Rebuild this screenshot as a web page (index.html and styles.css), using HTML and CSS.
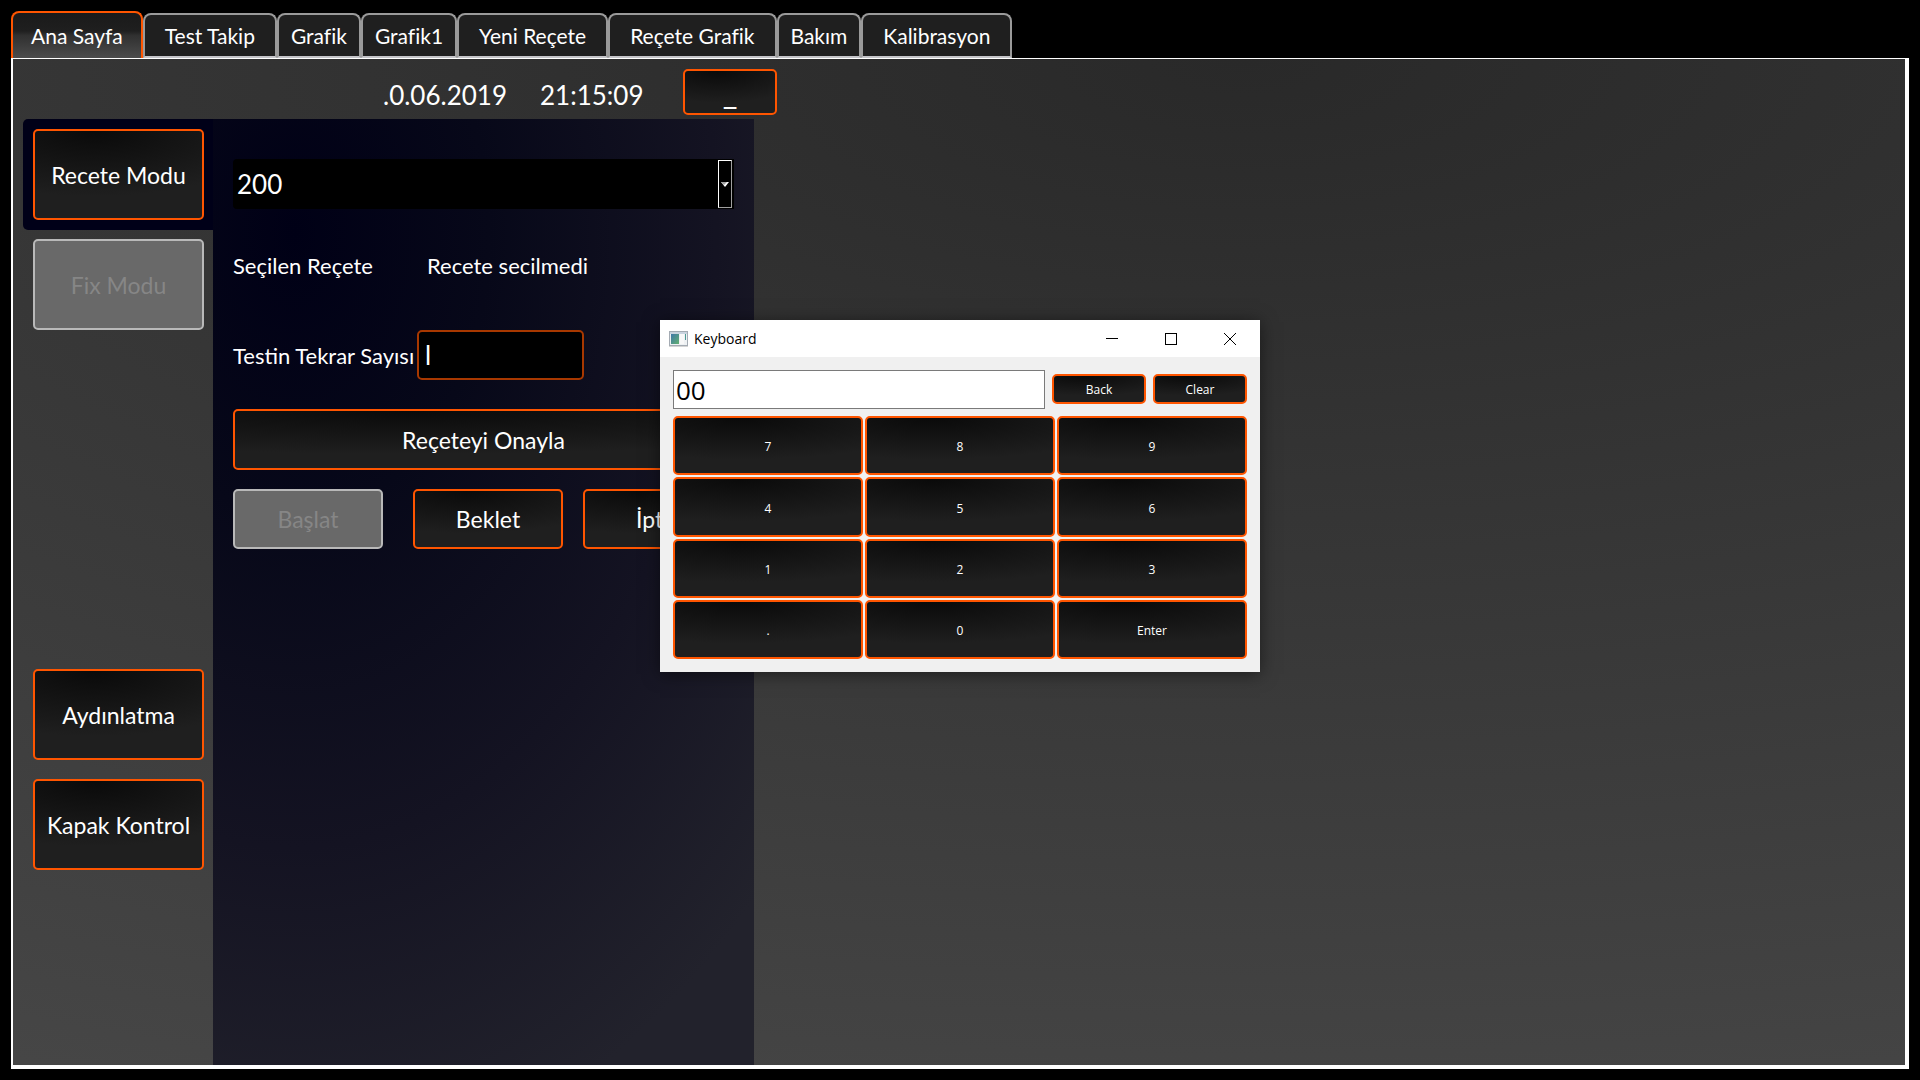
FILE: index.html
```html
<!DOCTYPE html>
<html lang="tr">
<head>
<meta charset="utf-8">
<title>Ana Sayfa</title>
<link rel="stylesheet" href="styles.css">
</head>
<body>
<div class="app">
  <nav class="tabs">
    <button class="tab tab-active" type="button">Ana Sayfa</button>
    <button class="tab tab-wide" type="button">Test Takip</button>
    <button class="tab" type="button">Grafik</button>
    <button class="tab" type="button">Grafik1</button>
    <button class="tab tab-wide" type="button">Yeni Reçete</button>
    <button class="tab tab-wide" type="button">Reçete Grafik</button>
    <button class="tab" type="button">Bakım</button>
    <button class="tab tab-wide" type="button">Kalibrasyon</button>
  </nav>
  <main class="page">
    <header class="topbar">
      <span class="date">.0.06.2019</span>
      <span class="time">21:15:09</span>
      <button class="btn btn-minimize" type="button">_</button>
    </header>
    <div class="content">
      <aside class="sidebar">
        <div class="mode mode-active"><button class="btn btn-side" type="button">Recete Modu</button></div>
        <div class="mode"><button class="btn btn-side" type="button" disabled>Fix Modu</button></div>
        <div class="tools">
          <button class="btn btn-side" type="button">Aydınlatma</button>
          <button class="btn btn-side" type="button">Kapak Kontrol</button>
        </div>
      </aside>
      <section class="recipe">
        <div class="combo">
          <select class="combo-select" aria-label="Reçete"><option>200</option></select>
          <span class="combo-arrow"><svg width="8" height="5" viewBox="0 0 8 5"><path d="M0 0H8L4 5Z" fill="#fff"/><path d="M0 0H6L3 3Z" fill="#a0a0a0"/></svg></span>
        </div>
        <div class="selected">
          <span class="selected-label">Seçilen Reçete</span>
          <span>Recete secilmedi</span>
        </div>
        <div class="repeat">
          <label for="repeat">Testin Tekrar Sayısı</label>
          <input class="repeat-input" id="repeat" type="text" value="l">
        </div>
        <button class="btn btn-confirm" type="button">Reçeteyi Onayla</button>
        <div class="actions">
          <button class="btn btn-action" type="button" disabled>Başlat</button>
          <button class="btn btn-action btn-hold" type="button">Beklet</button>
          <button class="btn btn-action" type="button">İptal</button>
        </div>
      </section>
    </div>
  </main>
</div>

<div class="dialog" role="dialog" aria-labelledby="dialog-title">
  <div class="titlebar">
    <svg class="app-icon" width="19" height="16" viewBox="0 0 19 16">
      <defs><linearGradient id="pane" x1="0" y1="0" x2="1" y2="1"><stop offset="0" stop-color="#3f78a8"/><stop offset="1" stop-color="#62b070"/></linearGradient></defs>
      <rect x="0.5" y="0.5" width="18" height="14" fill="#eef1f3" stroke="#a4abb3"/>
      <rect x="1" y="1" width="17" height="2" fill="#c9d3de"/>
      <rect x="2" y="3" width="8" height="10" fill="url(#pane)"/>
      <rect x="11" y="3" width="4" height="10" fill="#f8f8f8"/>
      <rect x="16" y="3" width="1" height="6" fill="#4e9a94"/>
      <rect x="0" y="15" width="19" height="1" fill="#d4d4d4"/>
    </svg>
    <span class="title" id="dialog-title">Keyboard</span>
    <button class="win" type="button" aria-label="Minimize"><svg width="12" height="12" viewBox="0 0 12 12"><path d="M0 5.5H12" stroke="#000"/></svg></button>
    <button class="win" type="button" aria-label="Maximize"><svg width="12" height="12" viewBox="0 0 12 12"><rect x="0.5" y="0.5" width="11" height="11" fill="none" stroke="#000"/></svg></button>
    <button class="win" type="button" aria-label="Close"><svg width="12" height="12" viewBox="0 0 12 12"><path d="M0 0L12 12M12 0L0 12" stroke="#000"/></svg></button>
  </div>
  <div class="pad">
    <div class="entry">
      <input class="entry-input" type="text" value="00" aria-label="Value">
      <button class="btn btn-edit" type="button">Back</button>
      <button class="btn btn-edit" type="button">Clear</button>
    </div>
    <div class="keys">
      <button class="btn key" type="button">7</button>
      <button class="btn key" type="button">8</button>
      <button class="btn key" type="button">9</button>
      <button class="btn key" type="button">4</button>
      <button class="btn key" type="button">5</button>
      <button class="btn key" type="button">6</button>
      <button class="btn key" type="button">1</button>
      <button class="btn key" type="button">2</button>
      <button class="btn key" type="button">3</button>
      <button class="btn key" type="button">.</button>
      <button class="btn key" type="button">0</button>
      <button class="btn key" type="button">Enter</button>
    </div>
  </div>
</div>
</body>
</html>
```
FILE: styles.css
```css
* { box-sizing: border-box; }

body {
  margin: 0;
  background: #000;
  color: #fff;
  font-family: Lato, "Liberation Sans", sans-serif;
  font-size: 22px;
}

button, input, select { margin: 0; font-family: inherit; color: inherit; }

.app {
  display: flex;
  flex-direction: column;
  min-height: 100vh;
  padding: 11px;
}

/* Tabs */
.tabs { display: flex; align-items: flex-end; height: 47px; }

.tab {
  height: 45px;
  padding: 0 12px;
  border: 2px solid #9a9a9a;
  border-bottom-color: #c4c4c8;
  border-radius: 8px 8px 0 0;
  background: #1f1f1f;
  font-size: 21px;
  line-height: 24px;
}
.tab-wide { padding: 0 20px; }
.tab-active {
  height: 47px;
  padding: 0 18px;
  border-color: #ff5500;
  border-bottom: 0;
  background: linear-gradient(#1a1a1a 0%, #1f1f1f 40%, #303030 50%, #4c4c4c 100%);
}

/* Page frame */
.page {
  display: flex;
  flex: 1;
  flex-direction: column;
  border: solid #fff;
  border-width: 1px 4px 4px 2px;
  background: radial-gradient(160% 118% at 65% 0, #292929, #484848);
}

.topbar {
  display: flex;
  align-items: center;
  height: 60px;
  padding: 12px 0 0 370px;
  font-size: 26px;
  line-height: 32px;
}
.date { width: 124px; white-space: nowrap; }
.time { margin-left: 33px; width: 104px; }
.topbar .btn-minimize { width: 94px; height: 46px; margin: -7px 0 0 39px; font-size: 32px; line-height: 32px; }

.content { display: flex; flex: 1; }

.btn {
  padding: 0;
  border: 2px solid #ff5500;
  border-radius: 5px;
  background: radial-gradient(110% 75% at 35% 0, #0a0a0a, #1f1f1f);
  color: #fff;
  font-size: 23px;
}
.btn:disabled { border-color: #b9b9b9; background: #696969; color: #868686; }

/* Sidebar */
.sidebar { width: 200px; padding-left: 10px; }
.mode { padding: 9px 10px 10px; }
.mode-active { padding-top: 10px; border-radius: 5px 0 0 5px; background: #000018; }
.btn-side { display: block; width: 171px; height: 91px; white-space: nowrap; }
.tools { display: grid; gap: 19px; padding: 329px 10px 0; }

/* Recipe panel */
.recipe {
  width: 541px;
  padding: 40px 20px;
  background: radial-gradient(120% 100% at 15% 12%, #000016, #070819 30%, #141322 65%, #22222c 100%);
}
.combo {
  display: flex;
  height: 50px;
  padding: 1px 2px 1px 0;
  border-radius: 4px 0 0 4px;
  background: #000;
}
.combo-select {
  flex: 1;
  padding: 0 4px;
  border: 0;
  background: transparent;
  appearance: none;
  font-size: 26px;
}
.combo-arrow {
  display: flex;
  align-items: center;
  justify-content: center;
  width: 14px;
  border: 1px solid #fff;
  border-right-color: #a0a0a0;
  border-bottom-color: #a0a0a0;
}
.selected { display: flex; margin-top: 43px; line-height: 28px; }
.selected-label { width: 194px; }
.repeat { display: flex; align-items: center; justify-content: space-between; width: 351px; margin-top: 50px; white-space: nowrap; }
.repeat-input {
  width: 167px;
  height: 50px;
  padding: 0 6px;
  border: 2px solid #a83800;
  border-radius: 5px;
  background: #000;
  font-size: 26px;
}
.btn-confirm { display: block; width: 100%; height: 61px; margin-top: 29px; }
.actions { display: flex; margin-top: 19px; }
.btn-action { width: 150px; height: 60px; }
.btn-hold { margin: 0 20px 0 30px; }

/* Keypad window floating over the page */
.dialog {
  position: absolute;
  left: 660px;
  top: 320px;
  width: 600px;
  background: #f0f0f0;
  color: #000;
  font-family: "Open Sans", "Noto Sans", sans-serif;
  box-shadow: 0 2px 16px rgba(0, 0, 0, 0.5);
}
.titlebar { display: flex; align-items: center; height: 37px; padding: 0 1px 0 9px; background: #fff; }
.title { flex: 1; margin-left: 6px; font-size: 14px; line-height: 20px; }
.win {
  display: flex;
  align-items: center;
  justify-content: center;
  width: 59px;
  height: 35px;
  padding: 0;
  border: 0;
  background: transparent;
}
.pad { padding: 13px; }
.entry { display: flex; align-items: center; gap: 7px; margin-bottom: 7px; }
.entry-input {
  flex: 1;
  min-width: 0;
  height: 39px;
  padding: 0 2px;
  border: 1px solid #7a7a7a;
  background: #fff;
  font-size: 26px;
}
.btn-edit { width: 94px; height: 30px; margin-bottom: 1px; font-size: 12px; }
.keys { display: grid; grid-template-columns: repeat(3, 1fr); grid-template-rows: 59px 60px 59px 59px; gap: 2px; }
.key { padding-top: 2px; font-size: 12px; }
```
